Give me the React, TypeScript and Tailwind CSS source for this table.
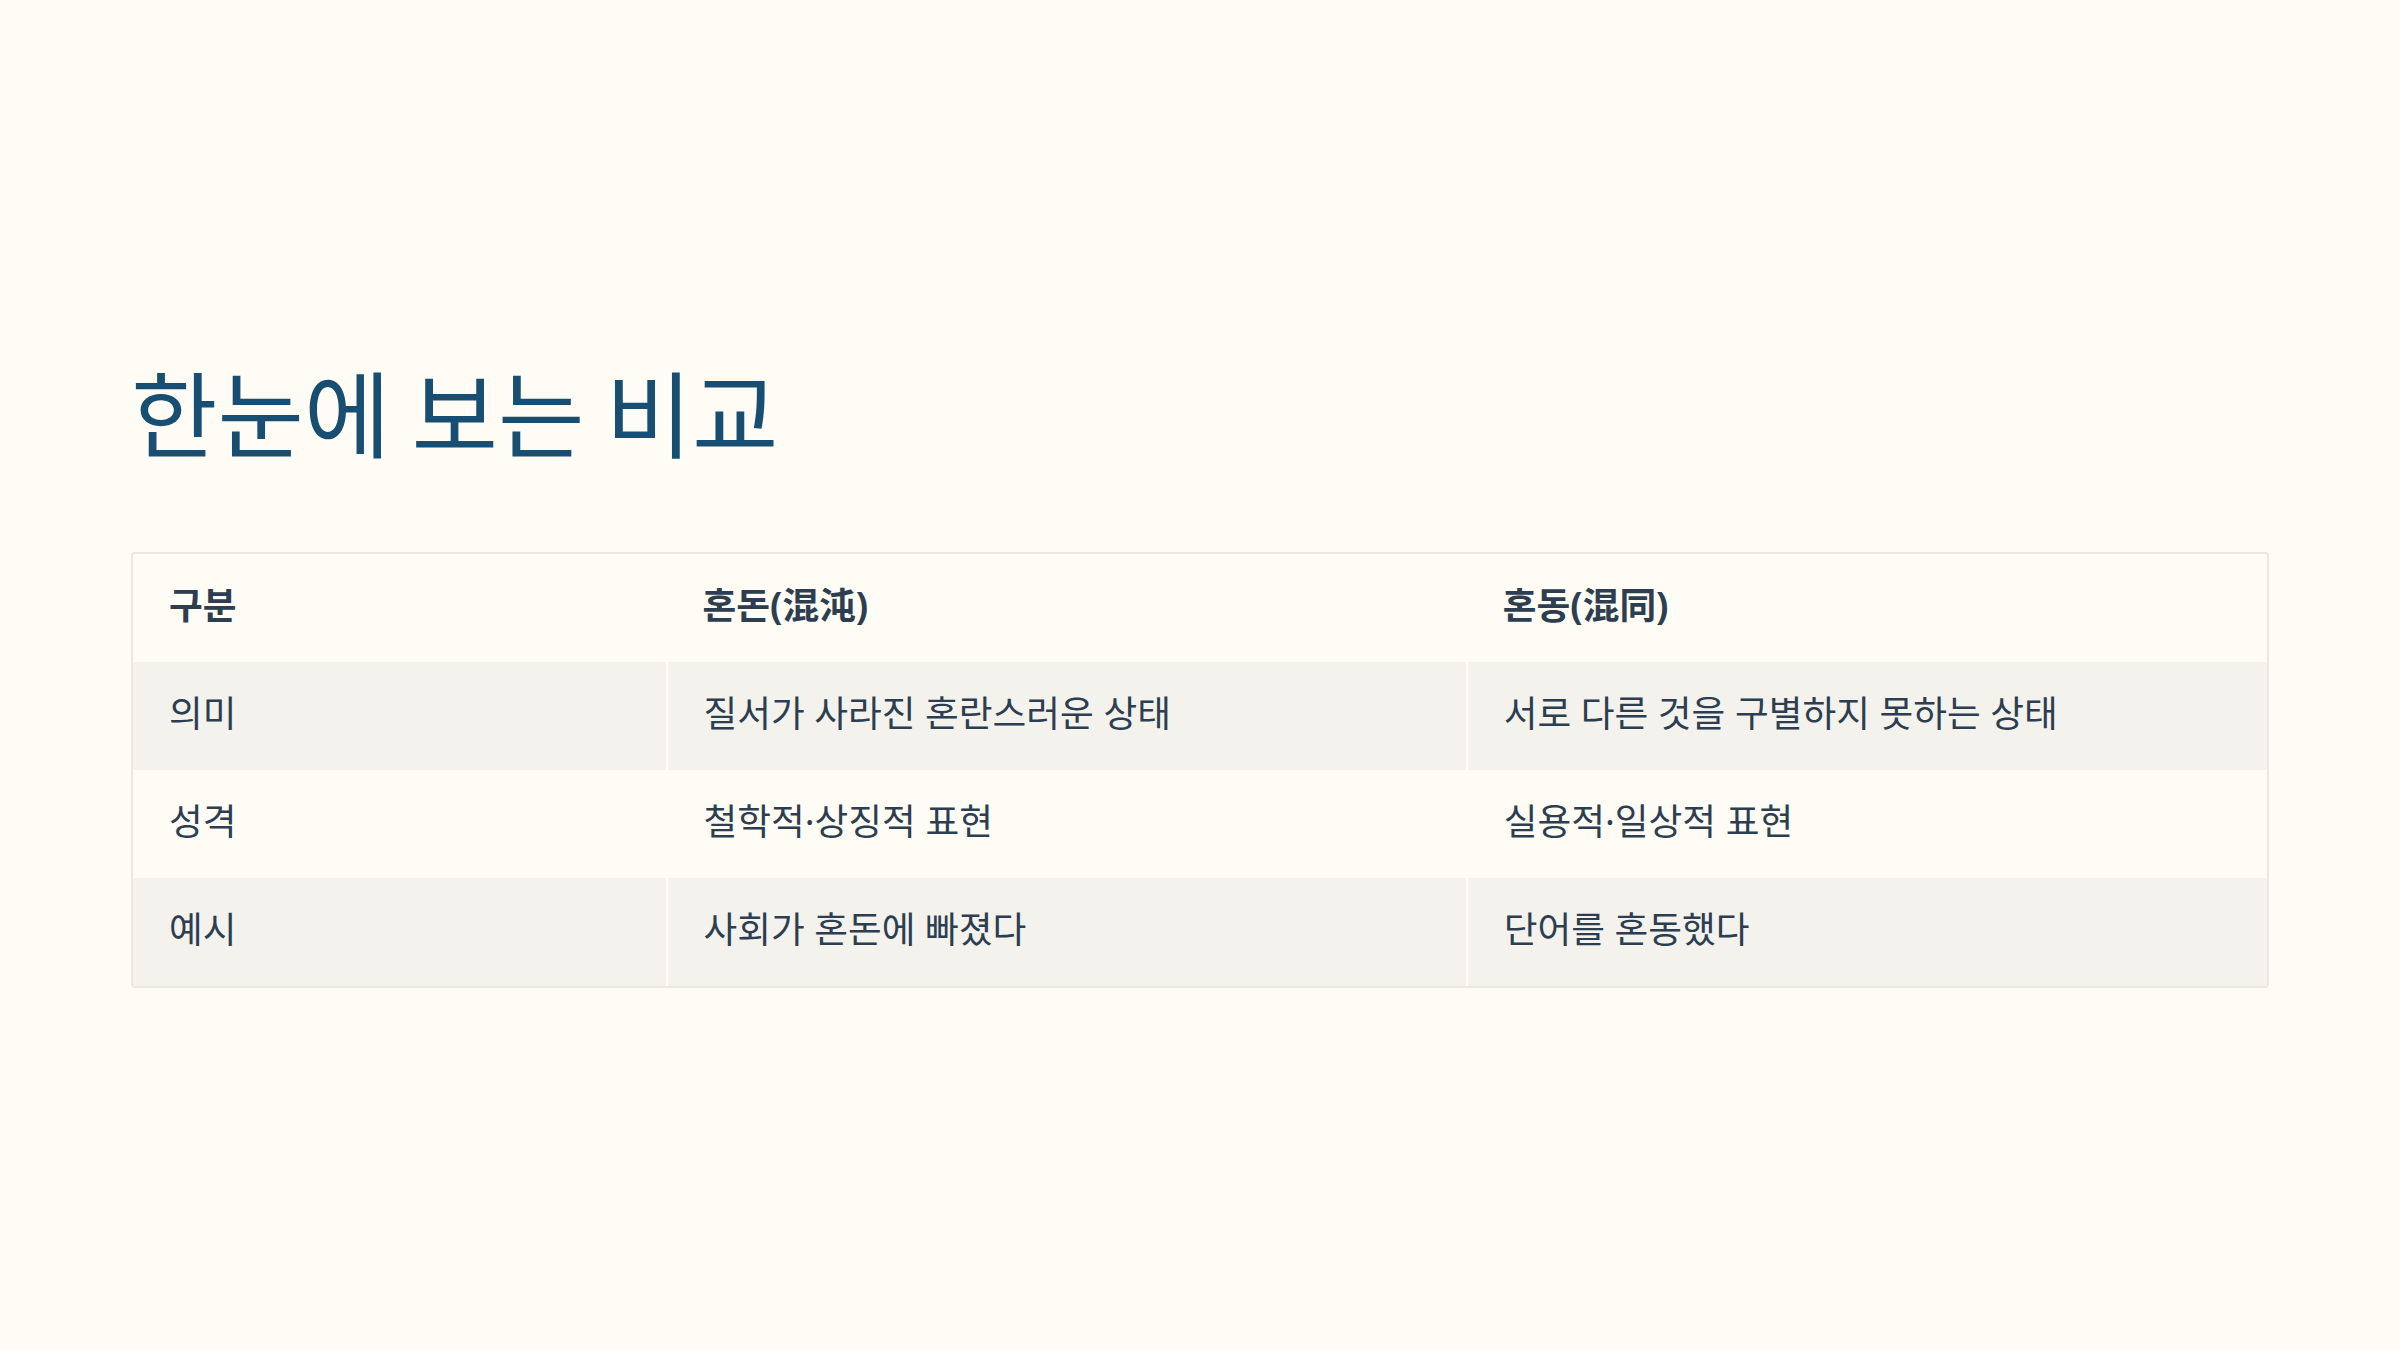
const rows = [
  { label: "의미", chaos: "질서가 사라진 혼란스러운 상태", confuse: "서로 다른 것을 구별하지 못하는 상태" },
  { label: "성격", chaos: "철학적·상징적 표현", confuse: "실용적·일상적 표현" },
  { label: "예시", chaos: "사회가 혼돈에 빠졌다", confuse: "단어를 혼동했다" },
];

export default function App() {
  return (
    <div
      className="flex h-[1350px] w-full flex-col bg-[#fffcf5] px-[131px] pt-[354px]"
      style={{ fontFamily: '"Noto Sans CJK KR", "Noto Sans", sans-serif' }}
    >
      <h1 className="text-[94px] font-normal leading-[1.2] text-[#174e71]">한눈에 보는 비교</h1>
      <div className="mt-[85px] overflow-hidden rounded-[4px] border-2 border-[#ebe8e1]">
        <table
          className="w-full table-fixed border-collapse text-[36.7px] leading-[1.4] text-[#2c3e50]"
          style={{ fontFamily: '"Noto Sans", "Noto Sans CJK KR", sans-serif' }}
        >
          <colgroup>
            <col className="w-1/4" />
            <col className="w-[37.5%]" />
            <col className="w-[37.5%]" />
          </colgroup>
          <thead>
            <tr className="h-[108px] bg-[#fffcf5]">
              <th className="px-[36px] pb-[5px] text-left font-bold">구분</th>
              <th className="px-[36px] pb-[5px] text-left font-bold">혼돈(混沌)</th>
              <th className="px-[36px] pb-[5px] text-left font-bold">혼동(混同)</th>
            </tr>
          </thead>
          <tbody>
            {rows.map((r, i) => (
              <tr key={r.label} className={i % 2 === 0 ? "h-[108px] bg-[#f4f2ed]" : "h-[108px] bg-[#fffcf5]"}>
                <td className="border-r-2 border-[#fffcf5] px-[36px] pb-[4px]">{r.label}</td>
                <td className="border-r-2 border-[#fffcf5] px-[36px] pb-[4px]">{r.chaos}</td>
                <td className="px-[36px] pb-[4px]">{r.confuse}</td>
              </tr>
            ))}
          </tbody>
        </table>
      </div>
    </div>
  );
}
